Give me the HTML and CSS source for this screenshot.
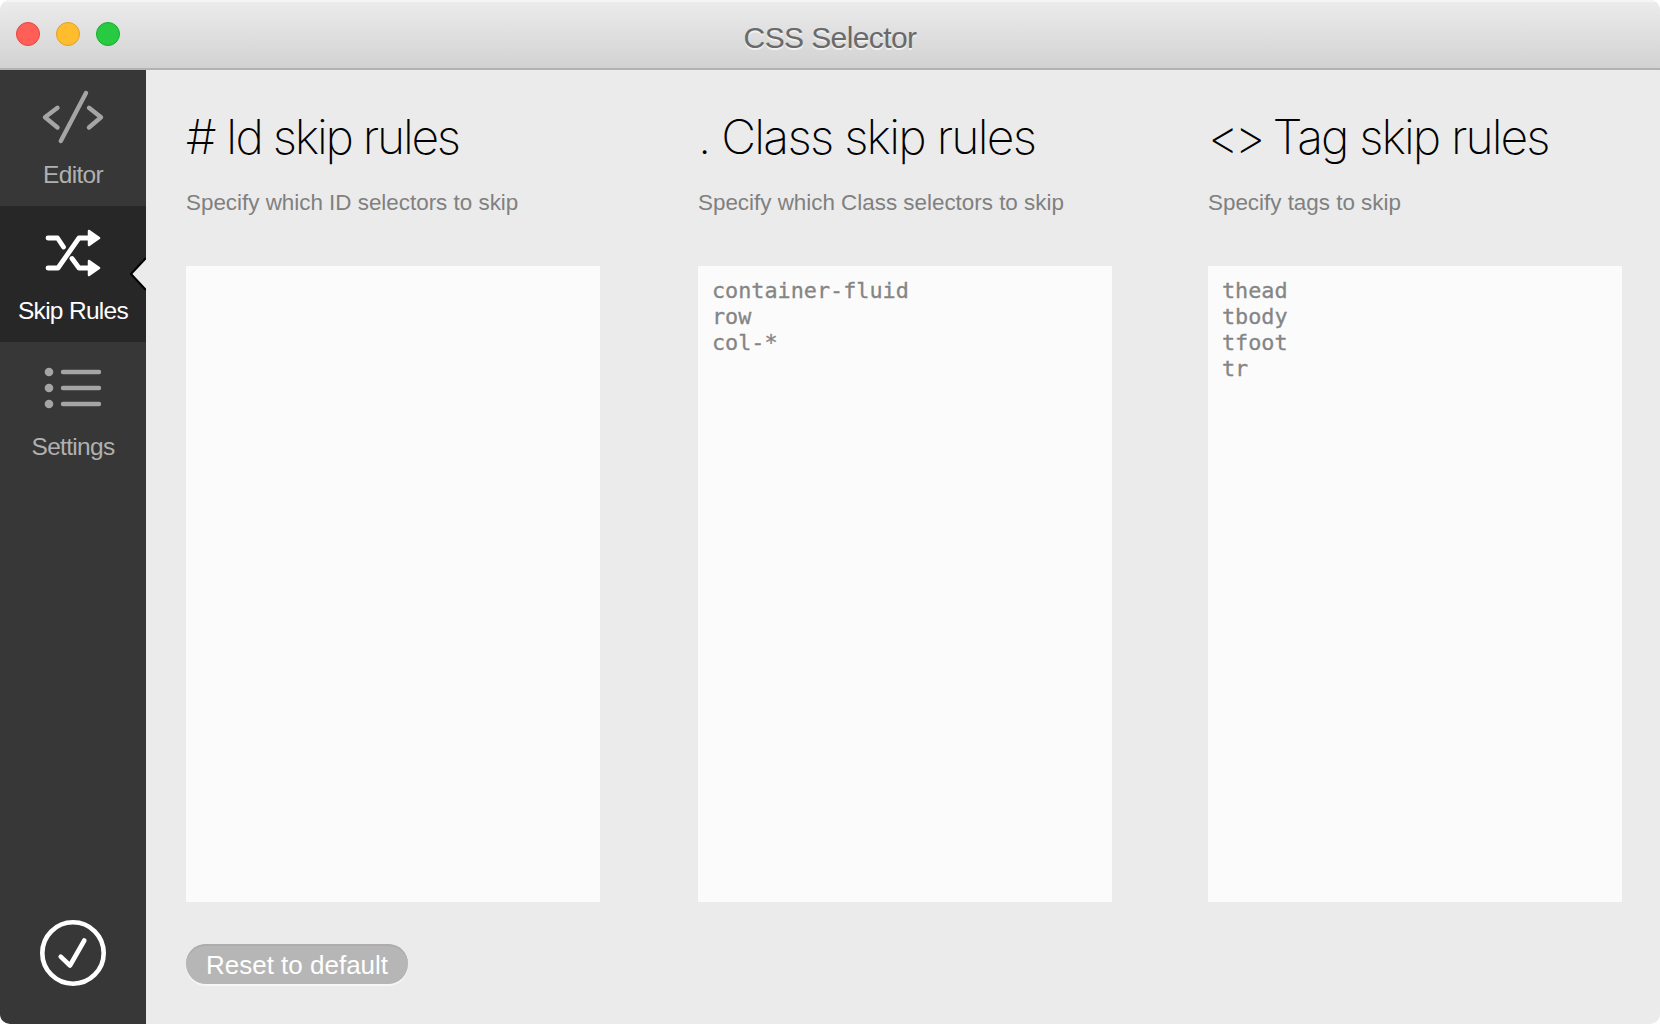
FILE: index.html
```html
<!DOCTYPE html>
<html lang="en">
<head>
<meta charset="utf-8">
<title>CSS Selector</title>
<link rel="stylesheet" href="styles.css">
</head>
<body>
<div class="window">
  <header class="titlebar">
    <div class="lights">
      <span class="light close"></span>
      <span class="light minimize"></span>
      <span class="light zoom"></span>
    </div>
    <h1 class="title">CSS Selector</h1>
  </header>
  <div class="body">
    <nav class="sidebar">
      <a class="item">
        <svg class="icon" viewBox="0 0 146 90"><path d="M57.500 37.800 45 47.300l12.500 10.200M86 23 60.800 71M89 37.800l12 9.500-12 10.200"/></svg>
        <span class="label">Editor</span>
      </a>
      <a class="item active">
        <svg class="icon" viewBox="0 0 146 90"><path d="M48 32h9.500l6 9M48 62h10l21-30h10M72 52.500l7 9.500h10"/><path class="solid" d="M89 25l10 7-10 7zM89 55l10 7-10 7z"/></svg>
        <span class="label">Skip Rules</span>
        <svg class="pointer" viewBox="0 0 16 34"><path d="M16 1 1 17l15 16"/></svg>
      </a>
      <a class="item">
        <svg class="icon" viewBox="0 0 146 90"><path d="M63 30h36M63 46h36M63 62h36"/><g class="dots"><circle cx="49" cy="30" r="4.3"/><circle cx="49" cy="46" r="4.3"/><circle cx="49" cy="62" r="4.3"/></g></svg>
        <span class="label">Settings</span>
      </a>
      <svg class="confirm" viewBox="0 0 66 66"><circle cx="33" cy="33" r="30.700"/><path d="M20.700 36.700l9.300 8.800 14.300-25"/></svg>
    </nav>
    <main class="content">
      <div class="columns">
        <section class="column">
          <h2 class="heading id"># Id skip rules</h2>
          <p class="hint">Specify which ID selectors to skip</p>
          <div class="rules"></div>
        </section>
        <section class="column">
          <h2 class="heading class">. Class skip rules</h2>
          <p class="hint">Specify which Class selectors to skip</p>
          <div class="rules">container-fluid
row
col-*</div>
        </section>
        <section class="column">
          <h2 class="heading tag"><span class="brackets">&lt;&gt;</span> Tag skip rules</h2>
          <p class="hint">Specify tags to skip</p>
          <div class="rules">thead
tbody
tfoot
tr</div>
        </section>
      </div>
      <button class="reset">Reset to default</button>
    </main>
  </div>
</div>
</body>
</html>
```
FILE: styles.css
```css
* { box-sizing: border-box; }
body {
  margin: 0;
  background: #fff;
  font-family: "Liberation Sans", Arial, sans-serif;
}
.window {
  height: 1024px;
  display: flex;
  flex-direction: column;
  border-radius: 10px;
  overflow: hidden;
  background: #ebebeb;
}
.titlebar {
  height: 70px;
  flex: none;
  display: grid;
  grid-template-columns: 146px 1fr 146px;
  background: linear-gradient(#ececec, #d2d2d2);
  border-bottom: 2px solid #b2b2b2;
  box-shadow: inset 0 2px 0 #f5f5f5;
}
.lights { display: flex; gap: 16px; padding: 22px 0 0 16px; }
.light { width: 24px; height: 24px; border-radius: 50%; border: 1px solid; }
.close { background: #ff5f57; border-color: #e2463f; }
.minimize { background: #ffbd2e; border-color: #e0a02a; }
.zoom { background: #28ca41; border-color: #14ae2d; }
.title {
  margin: 0;
  text-align: center;
  font-size: 30px;
  line-height: 34px;
  padding-top: 21px;
  font-weight: 400;
  letter-spacing: -0.6px;
  color: #6a6a6a;
  text-shadow: 0 2px 0 #f0f0f0;
}
.body { flex: 1; display: flex; }
.sidebar {
  width: 146px;
  flex: none;
  background: #373737;
  display: flex;
  flex-direction: column;
  align-items: center;
}
.item {
  position: relative;
  width: 146px;
  height: 136px;
  display: flex;
  flex-direction: column;
  align-items: center;
  color: #b0b0b0;
}
.active { background: #272727; color: #fff; }
.icon {
  width: 146px;
  height: 90px;
  fill: none;
  stroke: #a5a5a5;
  stroke-width: 4.4;
  stroke-linecap: round;
  stroke-linejoin: round;
}
.active .icon { stroke: #fff; stroke-width: 4.8; }
.active .solid { fill: #fff; stroke-width: 2.5; }
.dots { fill: #a5a5a5; stroke: none; }
.label {
  font-size: 24.5px;
  line-height: 28px;
  padding-top: 1px;
  letter-spacing: -0.7px;
  white-space: nowrap;
}
.pointer {
  position: absolute;
  right: 0;
  top: 51px;
  width: 16px;
  height: 34px;
  fill: #ebebeb;
  stroke: #000;
  stroke-width: 2;
}
.confirm {
  width: 66px;
  height: 66px;
  margin: auto 0 38px;
  fill: none;
  stroke: #fff;
  stroke-width: 4.6;
  stroke-linecap: round;
  stroke-linejoin: round;
}
.content { flex: 1; padding: 0 38px 0 40px; }
.columns { display: flex; justify-content: space-between; }
.column { width: 414px; }
.column:nth-child(2) { margin-left: 2px; }
.heading {
  margin: 35px 0 0;
  height: 69px;
  font: 200 48px/64px Inter, sans-serif;
  white-space: nowrap;
  color: #000;
}
.id { letter-spacing: -2.25px; }
.class { letter-spacing: -1.75px; }
.tag { letter-spacing: -1.9px; }
.brackets { letter-spacing: -4.5px; }
.hint {
  margin: 15px 0 0;
  font-size: 22.4px;
  line-height: 28px;
  height: 77px;
  color: #808080;
  white-space: nowrap;
}
.rules {
  height: 636px;
  padding: 12px 14px;
  background: #fbfbfb;
  color: #858585;
  font: 21.8px/26px "DejaVu Sans Mono", monospace;
  -webkit-text-stroke: 0.3px #858585;
  white-space: pre;
}
.reset {
  margin: 42px 0 0;
  display: block;
  width: 222px;
  height: 40px;
  border: 0;
  border-radius: 20px;
  padding: 2px 0 0;
  background: #b6b6b6;
  box-shadow: inset 0 2px 0 #adadad, 0 2px 0 #f6f6f6;
  color: #fff;
  font: 26px/38px "Liberation Sans", Arial, sans-serif;
  white-space: nowrap;
}
```
